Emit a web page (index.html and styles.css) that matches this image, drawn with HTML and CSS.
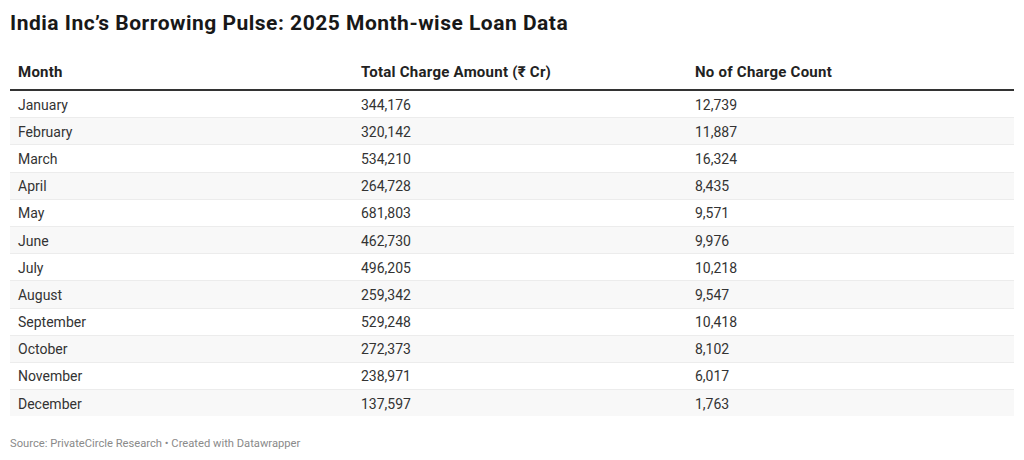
FILE: index.html
```html
<!DOCTYPE html>
<html>
<head>
<meta charset="utf-8">
<link rel="stylesheet" href="styles.css">
</head>
<body>
<div class="chart">
  <h1 class="title">India Inc’s Borrowing Pulse: 2025 Month-wise Loan Data</h1>
  <table class="data">
    <colgroup><col class="c1"><col class="c2"><col class="c3"></colgroup>
    <thead>
      <tr><th>Month</th><th>Total Charge Amount (₹ Cr)</th><th>No of Charge Count</th></tr>
    </thead>
    <tbody>
      <tr><td>January</td><td>344,176</td><td>12,739</td></tr>
      <tr><td>February</td><td>320,142</td><td>11,887</td></tr>
      <tr><td>March</td><td>534,210</td><td>16,324</td></tr>
      <tr><td>April</td><td>264,728</td><td>8,435</td></tr>
      <tr><td>May</td><td>681,803</td><td>9,571</td></tr>
      <tr><td>June</td><td>462,730</td><td>9,976</td></tr>
      <tr><td>July</td><td>496,205</td><td>10,218</td></tr>
      <tr><td>August</td><td>259,342</td><td>9,547</td></tr>
      <tr><td>September</td><td>529,248</td><td>10,418</td></tr>
      <tr><td>October</td><td>272,373</td><td>8,102</td></tr>
      <tr><td>November</td><td>238,971</td><td>6,017</td></tr>
      <tr><td>December</td><td>137,597</td><td>1,763</td></tr>
    </tbody>
  </table>
  <p class="footer">Source: PrivateCircle Research • Created with Datawrapper</p>
</div>
</body>
</html>
```
FILE: styles.css
```css
html, body { margin: 0; padding: 0; background: #fff; }
body { font-family: Roboto, "Liberation Sans", sans-serif; color: #333; }
.chart { padding: 11px 10px 0 10px; }
.title {
  margin: 0;
  font-size: 21px;
  line-height: 24px;
  letter-spacing: 0.5px;
  font-weight: 700;
  color: #181818;
}
.data {
  width: 100%;
  margin-top: 20px;
  border-collapse: collapse;
  font-size: 14px;
}
.c1 { width: 343px; }
.c2 { width: 334px; }
.c3 { width: 327px; }
.data th {
  text-align: left;
  font-weight: 700;
  font-size: 15px;
  letter-spacing: 0.25px;
  color: #222;
  padding: 0 8px;
  height: 34px;
  vertical-align: middle;
  border-bottom: 2px solid #333;
}
.data td {
  padding: 1px 8px 0 8px;
  height: 25.2px;
  line-height: 16px;
  border-bottom: 1px solid #ececec;
}
.data tbody tr:nth-child(even) td { background: #f8f8f8; }
.data tbody tr:last-child td { border-bottom: none; }
.footer {
  margin: 21px 0 0 0;
  font-size: 11.2px;
  line-height: 14px;
  color: #8a8a8a;
}
```
